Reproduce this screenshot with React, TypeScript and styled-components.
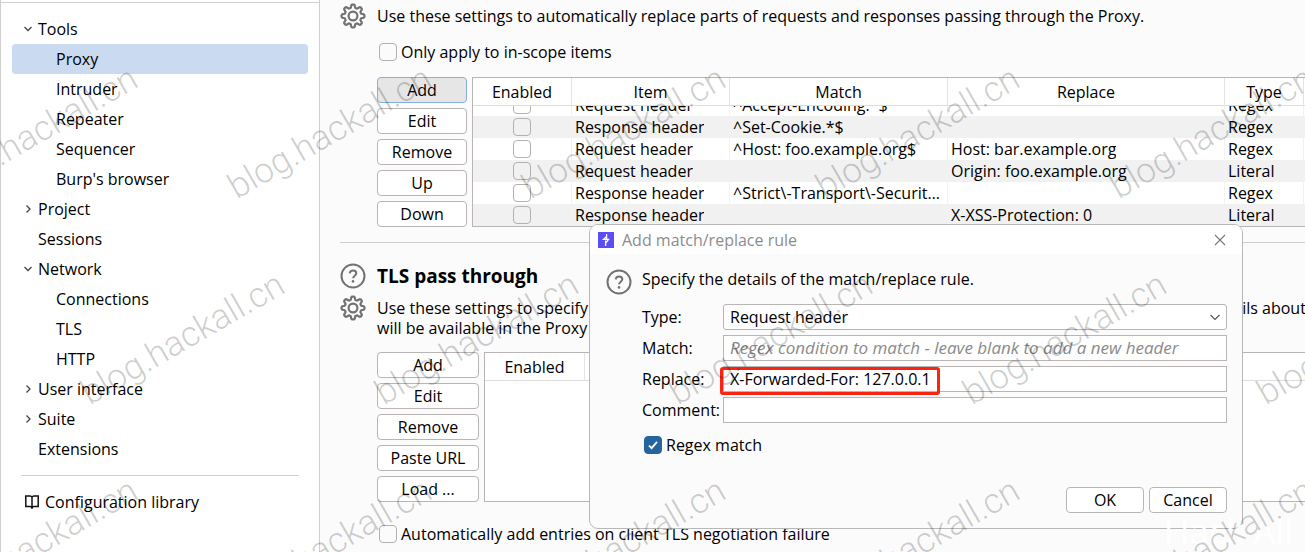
import React from 'react';
import styled, { createGlobalStyle, css } from 'styled-components';

const Global = createGlobalStyle`
  *, *::before, *::after { box-sizing: border-box; }
  body {
    margin: 0;
    background: #fbfbfb;
    color: #000;
    font: 16px/20px "Open Sans", "Noto Sans", sans-serif;
  }
  button, input, select { font: inherit; color: inherit; }
`;

const Page = styled.div`
  position: relative;
  display: flex;
  height: 100vh;
  min-height: 552px;
  overflow: hidden;
`;

/* ---------- sidebar ---------- */

const Sidebar = styled.nav`
  flex: 0 0 320px;
  display: flex;
  flex-direction: column;
  background: #fff;
  border: solid #cfcfcf;
  border-width: 0 1px;
  padding: 2px 0 0;
`;

const Tree = styled.ul`
  list-style: none;
  margin: 0;
  padding: 11px 11px;
  border-top: 1px solid #cfcfcf;
`;

const TreeLink = styled.a<{ $level: number; $active?: boolean }>`
  display: flex;
  align-items: center;
  height: 30px;
  padding-left: ${p => (p.$level === 2 ? 44 : 10)}px;
  border-radius: 4px;
  color: inherit;
  text-decoration: none;
  background: ${p => (p.$active ? '#cadaf0' : 'transparent')};
`;

const Twisty = styled.span`
  display: flex;
  width: 16px;
`;

const SideRule = styled.hr`
  width: 278px;
  margin: 0 20px;
  border: 0;
  border-top: 1px solid #cfcfcf;
`;

const LibraryLink = styled.a`
  display: flex;
  align-items: center;
  gap: 6px;
  height: 52px;
  padding-left: 24px;
  color: inherit;
  text-decoration: none;
`;

/* ---------- main panel ---------- */

const Main = styled.main`
  flex: 1;
  min-width: 0;
  padding: 3px 0 0 20px;
  overflow: hidden;
`;

const Heading = styled.div`
  display: grid;
  grid-template-columns: 26px 1fr;
  column-gap: 11px;
  row-gap: 6px;
  align-items: start;
`;

const Title = styled.h2`
  margin: 0;
  font-size: 19px;
  line-height: 26px;
  font-weight: 700;
`;

const Intro = styled.p`
  margin: 0;
  padding-top: 3px;
  white-space: nowrap;
`;

const Body = styled.div`
  padding-left: 37px;
`;

const CheckLabel = styled.label`
  display: flex;
  align-items: center;
  gap: 4px;
  width: max-content;
  height: 20px;
  margin-left: 2px;
`;

const Check = styled.input`
  appearance: none;
  flex: none;
  display: block;
  width: 18px;
  height: 18px;
  margin: 0;
  border: 1px solid #b4b0b0;
  border-radius: 4px;
  background: transparent;
  &:checked {
    border-color: #26649e;
    background: #26649e url("data:image/svg+xml,%3Csvg xmlns='http://www.w3.org/2000/svg' viewBox='0 0 16 16'%3E%3Cpath d='M4 8.6l2.6 2.5L12 4.8' fill='none' stroke='white' stroke-width='1.8'/%3E%3C/svg%3E") center / 16px no-repeat;
  }
`;

const ScopeRow = styled.div`
  padding: 13px 0 15px;
`;

const Columns = styled.div`
  display: flex;
  align-items: flex-start;
  gap: 5px;
`;

const TlsColumns = styled(Columns)`
  padding-top: 14px;
`;

const AutoRow = styled.div`
  padding-top: 22px;
`;

const ButtonStack = styled.div<{ $width: number }>`
  flex: none;
  display: flex;
  flex-direction: column;
  gap: 5px;
  width: ${p => p.$width}px;
`;

const Button = styled.button<{ $focused?: boolean }>`
  height: 26px;
  padding: 0;
  border: 1px solid ${p => (p.$focused ? '#87afda' : '#b9b5b5')};
  border-radius: 4px;
  background: ${p => (p.$focused ? '#e6e6e6' : '#fff')};
  line-height: 24px;
`;

const TableFrame = styled.div`
  flex: 1;
  min-width: 0;
  height: 150px;
  border: 1px solid #b9b5b5;
  border-right: 0;
  background: #fff;
  overflow: hidden;
`;

const Table = styled.table`
  width: 100%;
  table-layout: fixed;
  border-collapse: separate;
  border-spacing: 0;
`;

const Th = styled.th`
  height: 28px;
  padding: 0;
  font-weight: 400;
  text-align: center;
  border-bottom: 1px solid #dedede;
  border-left: 1px solid #e4e4e4;
  &:first-child { border-left: 0; }
`;

const Tr = styled.tr<{ $clipped?: boolean }>`
  &:nth-child(even) { background: #f1f1f1; }
  td {
    height: ${p => (p.$clipped ? 10 : 22)}px;
  }
`;

const Td = styled.td`
  padding: 0;
  border-left: 1px solid #f2f2f2;
  &:first-child { border-left: 0; }
`;

const Cell = styled.div<{ $clipped?: boolean; $center?: boolean }>`
  display: flex;
  align-items: ${p => (p.$clipped ? 'flex-end' : 'center')};
  justify-content: ${p => (p.$center ? 'center' : 'flex-start')};
  height: ${p => (p.$clipped ? 10 : 22)}px;
  padding-left: ${p => (p.$center ? 0 : 3)}px;
  line-height: 22px;
  white-space: nowrap;
  overflow: hidden;
  ${p => p.$clipped && p.$center && css`padding-bottom: 2px;`}
`;

const Truncated = styled.span`
  overflow: hidden;
  text-overflow: ellipsis;
`;

const Rule = styled.hr`
  margin: 15px 0 20px;
  border: 0;
  border-top: 1px solid #cfcfcf;
`;

/* ---------- dialog ---------- */

const Dialog = styled.section`
  position: absolute;
  left: 589px;
  top: 224px;
  width: 654px;
  border: 1px solid #b8b8b8;
  border-radius: 9px;
  background: #fbfbfb;
  overflow: hidden;
`;

const TitleBar = styled.header`
  display: flex;
  align-items: center;
  gap: 8px;
  height: 29px;
  padding: 0 16px 0 8px;
  background: #fff;
  color: #8c8c8c;
`;

const DialogTitle = styled.h3`
  flex: 1;
  margin: 0;
  font-size: 16px;
  font-weight: 400;
`;

const CloseButton = styled.button`
  display: flex;
  padding: 0;
  border: 0;
  background: none;
`;

const DialogBody = styled.div`
  display: grid;
  grid-template-columns: 26px 1fr;
  column-gap: 10px;
  padding: 15px 15px 15px 16px;
`;

const DialogIntro = styled.p`
  margin: 0;
`;

const Form = styled.form`
  grid-column: 2;
  display: flex;
  flex-direction: column;
  gap: 5px;
  padding-top: 9px;
`;

const FieldRow = styled.div`
  display: grid;
  grid-template-columns: 76px 1fr;
  column-gap: 5px;
  align-items: center;
`;

const field = css`
  display: block;
  width: 100%;
  height: 26px;
  margin: 0;
  border: 1px solid #b9b5b5;
  background: #fff;
  outline: 0;
`;

const TextInput = styled.input`
  ${field}
  padding: 0 6px;
  &::placeholder { color: #8a8a8a; font-size: 16px; font-style: italic; opacity: 1; }
`;

const SelectBox = styled.div`
  position: relative;
  svg { position: absolute; right: 6px; top: 8px; pointer-events: none; }
`;

const Select = styled.select`
  ${field}
  appearance: none;
  padding: 0 6px;
  border-radius: 3px;
`;

const MatchInput = styled(TextInput)`
  &::placeholder { font-size: 17px; }
  text-overflow: clip;
`;

const Highlighted = styled.div`
  position: relative;
  &::after {
    content: "";
    position: absolute;
    left: -3px;
    top: 1px;
    width: 220px;
    height: 28px;
    border: 3px solid #fb2413;
    border-radius: 3px;
    pointer-events: none;
  }
`;

const RegexRow = styled.div`
  padding-top: 7px;
`;

const Actions = styled.div`
  display: flex;
  justify-content: flex-end;
  gap: 5px;
  padding-top: 27px;
  button { width: 78px; }
`;

/* ---------- watermark ---------- */

const WatermarkLayer = styled.div`
  position: absolute;
  inset: 0;
  overflow: hidden;
  pointer-events: none;
`;

const Mark = styled.span`
  position: absolute;
  transform: translate(-50%, -50%) rotate(-30deg);
  font: 300 35px/40px Roboto, sans-serif;
  color: rgba(0, 0, 0, 0.2);
  white-space: nowrap;
`;

const Signature = styled.div`
  position: absolute;
  right: 12px;
  bottom: 1px;
  font-size: 35px;
  line-height: 40px;
  color: #fff;
`;

/* ---------- icons ---------- */

const gearPath = (() => {
  const pts: string[] = [];
  for (let i = 0; i < 144; i++) {
    const a = (i / 144) * Math.PI * 2;
    const wave = Math.tanh(1.8 * Math.cos(8 * a)) / Math.tanh(1.8);
    const r = 9.9 + 1.6 * wave;
    pts.push(`${(13 + r * Math.sin(a)).toFixed(2)} ${(13 - r * Math.cos(a)).toFixed(2)}`);
  }
  return `M${pts.join('L')}Z`;
})();

const Gear = () => (
  <svg width="26" height="26" viewBox="0 0 26 26" fill="none" stroke="#727272" strokeWidth="2.2">
    <path d={gearPath} strokeLinejoin="round" />
    <circle cx="13" cy="13" r="4.4" />
  </svg>
);

const Help = () => (
  <svg width="26" height="26" viewBox="0 0 26 26" fill="none" stroke="#727272" strokeWidth="2">
    <circle cx="13" cy="13" r="11.5" />
    <path d="M9.7 10.3c.2-2 1.5-2.9 3.3-2.9s3.3 1.1 3.3 2.9c0 2.3-3.2 2.5-3.2 5" />
    <circle cx="13" cy="18.4" r="1.3" fill="#727272" stroke="none" />
  </svg>
);

const Arrow = ({ open }: { open: boolean }) => (
  <svg width="12" height="12" viewBox="0 0 12 12" fill="none" stroke="#444" strokeWidth="1.3">
    <path d={open ? 'M2.5 4L6 7.5L9.5 4' : 'M4.5 2.5L8 6L4.5 9.5'} />
  </svg>
);

const Book = () => (
  <svg width="14" height="14" viewBox="0 0 14 14" fill="none" stroke="#111" strokeWidth="1.5">
    <path d="M7 2.2C6.6 1.4 6 1 5 1H.8v10.5h4.2c1 0 1.6.4 2 1.5c.4-1.1 1-1.5 2-1.5h4.2V1H9C8 1 7.4 1.4 7 2.2zM7 2.2V13.5" />
  </svg>
);

const Logo = () => (
  <svg width="16" height="16" viewBox="0 0 16 16">
    <rect width="16" height="16" fill="#5b4ef5" />
    <path d="M8.6 2v2.4L5.500 7.3h5L7.6 11.3V14M8.6 4.4V7.3M7.6 8.5v2.8" fill="none" stroke="#fff" strokeWidth="1.3" />
  </svg>
);

const Cross = () => (
  <svg width="12" height="12" viewBox="0 0 12 12" stroke="#777" strokeWidth="1.1">
    <path d="M1 1l10 10M11 1L1 11" />
  </svg>
);

const Chevron = () => (
  <svg width="12" height="10" viewBox="0 0 12 10" fill="none" stroke="#555" strokeWidth="1.2">
    <path d="M1.5 3L6 7.5L10.5 3" />
  </svg>
);

/* ---------- data ---------- */

type Node = { text: string; level: 1 | 2; open?: boolean; active?: boolean };

const tree: Node[] = [
  { text: 'Tools', level: 1, open: true },
  { text: 'Proxy', level: 2, active: true },
  { text: 'Intruder', level: 2 },
  { text: 'Repeater', level: 2 },
  { text: 'Sequencer', level: 2 },
  { text: "Burp's browser", level: 2 },
  { text: 'Project', level: 1, open: false },
  { text: 'Sessions', level: 1 },
  { text: 'Network', level: 1, open: true },
  { text: 'Connections', level: 2 },
  { text: 'TLS', level: 2 },
  { text: 'HTTP', level: 2 },
  { text: 'User interface', level: 1, open: false },
  { text: 'Suite', level: 1, open: false },
  { text: 'Extensions', level: 1 },
];

const rules = [
  ['Request header', '^Accept-Encoding.*$', '', 'Regex'],
  ['Response header', '^Set-Cookie.*$', '', 'Regex'],
  ['Request header', '^Host: foo.example.org$', 'Host: bar.example.org', 'Regex'],
  ['Request header', '', 'Origin: foo.example.org', 'Literal'],
  ['Response header', '^Strict\\-Transport\\-Security.*$', '', 'Regex'],
  ['Response header', '', 'X-XSS-Protection: 0', 'Literal'],
];

const marks = [
  { y: 133, start: 36 },
  { y: 339, start: -111 },
  { y: 545, start: 36 },
].flatMap(row => Array.from({ length: 6 }, (_, i) => ({ x: row.start + i * 294, y: row.y })));

export default function App() {
  return (
    <Page>
      <Global />
      <Sidebar>
        <Tree>
          {tree.map(n => (
            <li key={n.text}>
              <TreeLink href="#" $level={n.level} $active={n.active}>
                {n.level === 1 && <Twisty>{n.open !== undefined && <Arrow open={n.open} />}</Twisty>}
                {n.text}
              </TreeLink>
            </li>
          ))}
        </Tree>
        <SideRule />
        <LibraryLink href="#"><Book />Configuration library</LibraryLink>
      </Sidebar>

      <Main>
        <Heading>
          <Gear />
          <Intro>Use these settings to automatically replace parts of requests and responses passing through the Proxy.</Intro>
        </Heading>
        <Body>
          <ScopeRow>
            <CheckLabel><Check type="checkbox" />Only apply to in-scope items</CheckLabel>
          </ScopeRow>
          <Columns>
            <ButtonStack $width={90}>
              {['Add', 'Edit', 'Remove', 'Up', 'Down'].map(t => <Button key={t} type="button" $focused={t === 'Add'}>{t}</Button>)}
            </ButtonStack>
            <TableFrame>
              <Table>
                <colgroup>
                  <col style={{ width: 98 }} /><col style={{ width: 158 }} /><col style={{ width: 218 }} />
                  <col /><col style={{ width: 79 }} /><col style={{ width: 2 }} />
                </colgroup>
                <thead>
                  <tr><Th>Enabled</Th><Th>Item</Th><Th>Match</Th><Th>Replace</Th><Th>Type</Th><Th /></tr>
                </thead>
                <tbody>
                  {rules.map((r, i) => (
                    <Tr key={i} $clipped={i === 0}>
                      <Td><Cell $center $clipped={i === 0}><Check type="checkbox" aria-label={`Enable rule ${i + 1}`} /></Cell></Td>
                      {r.map((c, j) => (
                        <Td key={j}><Cell $clipped={i === 0}><Truncated>{c}</Truncated></Cell></Td>
                      ))}
                      <Td />
                    </Tr>
                  ))}
                </tbody>
              </Table>
            </TableFrame>
          </Columns>
        </Body>

        <Rule />

        <Heading>
          <Help />
          <Title>TLS pass through</Title>
          <Gear />
          <Intro>
            Use these settings to specify destination web servers for which Burp will directly pass through TLS connections. Details about<br />
            will be available in the Proxy intercept view or history.
          </Intro>
        </Heading>
        <Body>
          <TlsColumns>
            <ButtonStack $width={102}>
              {['Add', 'Edit', 'Remove', 'Paste URL', 'Load ...'].map(t => <Button key={t} type="button">{t}</Button>)}
            </ButtonStack>
            <TableFrame>
              <Table>
                <colgroup><col style={{ width: 99 }} /><col /></colgroup>
                <thead><tr><Th>Enabled</Th><Th /></tr></thead>
              </Table>
            </TableFrame>
          </TlsColumns>
          <AutoRow>
            <CheckLabel><Check type="checkbox" />Automatically add entries on client TLS negotiation failure</CheckLabel>
          </AutoRow>
        </Body>
      </Main>

      <Dialog role="dialog" aria-labelledby="dialog-title">
        <TitleBar>
          <Logo />
          <DialogTitle id="dialog-title">Add match/replace rule</DialogTitle>
          <CloseButton type="button" aria-label="Close"><Cross /></CloseButton>
        </TitleBar>
        <DialogBody>
          <Help />
          <DialogIntro>Specify the details of the match/replace rule.</DialogIntro>
          <Form>
            <FieldRow>
              <label htmlFor="type">Type:</label>
              <SelectBox>
                <Select id="type"><option>Request header</option></Select>
                <Chevron />
              </SelectBox>
            </FieldRow>
            <FieldRow>
              <label htmlFor="match">Match:</label>
              <MatchInput id="match" placeholder="Regex condition to match - leave blank to add a new header" />
            </FieldRow>
            <FieldRow>
              <label htmlFor="replace">Replace:</label>
              <Highlighted><TextInput id="replace" defaultValue="X-Forwarded-For: 127.0.0.1" /></Highlighted>
            </FieldRow>
            <FieldRow>
              <label htmlFor="comment">Comment:</label>
              <TextInput id="comment" />
            </FieldRow>
            <RegexRow>
              <CheckLabel><Check type="checkbox" defaultChecked />Regex match</CheckLabel>
            </RegexRow>
            <Actions>
              <Button type="button">OK</Button>
              <Button type="button">Cancel</Button>
            </Actions>
          </Form>
        </DialogBody>
      </Dialog>

      <WatermarkLayer aria-hidden="true">
        <Signature>Hack All</Signature>
        {marks.map(m => <Mark key={`${m.x}-${m.y}`} style={{ left: m.x, top: m.y }}>blog.hackall.cn</Mark>)}
      </WatermarkLayer>
    </Page>
  );
}
